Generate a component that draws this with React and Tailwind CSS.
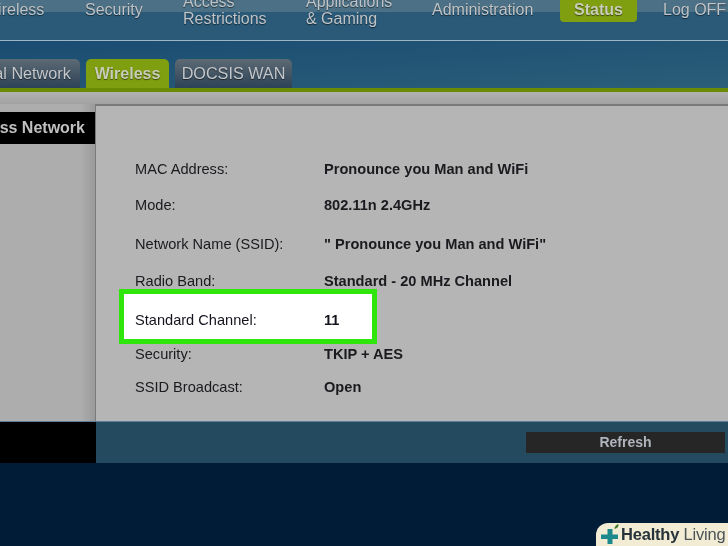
const font = { fontFamily: '"Liberation Sans", Arial, sans-serif' };

const rows = [
  { label: "MAC Address:", value: "Pronounce you Man and WiFi", mt: "mt-[55px]" },
  { label: "Mode:", value: "802.11n 2.4GHz", mt: "mt-[20px]" },
  { label: "Network Name (SSID):", value: "\" Pronounce you Man and WiFi\"", mt: "mt-[23px]" },
  { label: "Radio Band:", value: "Standard - 20 MHz Channel", mt: "mt-[21px]" },
  { label: "Standard Channel:", value: "11", mt: "mt-[23px]", hi: true },
  { label: "Security:", value: "TKIP + AES", mt: "mt-[18px]" },
  { label: "SSID Broadcast:", value: "Open", mt: "mt-[17px]" },
];

const shadow = "[text-shadow:0_1px_1px_rgba(0,0,0,0.55)]";

function Row({ label, value, mt, hi }) {
  return (
    <div className={`relative flex h-4 items-center text-[14.6px] leading-4 ${mt} ${hi ? "text-[#14141c]" : "text-[#1a1a1f]"}`}>
      {hi && <div className="absolute left-[-16px] top-[-23px] h-[55px] w-[258px] border-[5px] border-[#2fe60b] bg-white" />}
      <span className="relative w-[189px] shrink-0">{label}</span>
      <span className="relative font-bold">{value}</span>
    </div>
  );
}

function Tab({ children, active, className }) {
  return (
    <div className={`flex h-[29px] items-center justify-center rounded-t-[5px] text-[16.2px] ${shadow} ${active ? "bg-[#7f9f10] text-[16px] font-bold text-[#c9cdb8]" : "bg-gradient-to-b from-[#5d6a74] to-[#2c4256] text-[#c4c8cc]"} ${className}`}>
      {children}
    </div>
  );
}

export default function App() {
  return (
    <div style={font} className="flex h-[546px] w-[728px] flex-col overflow-hidden bg-[#011c36] blur-[0.4px]">
      {/* Top navigation */}
      <div className="h-[40px] shrink-0 bg-gradient-to-b from-[#4c7186] from-[30%] to-[#2a5a78] to-[31%]">
        <div className={`flex h-[40px] items-start overflow-hidden text-[16px] leading-[17px] text-[#bfc4c8] ${shadow}`}>
          <span className="ml-[-17px] mt-[1px] w-[102px]">Wireless</span>
          <span className="mt-[1px] w-[98px]">Security</span>
          <span className="mt-[-7px] w-[123px]">Access<br />Restrictions</span>
          <span className="mt-[-7px] w-[126px]">Applications<br />&amp; Gaming</span>
          <span className="mt-[1px] w-[128px]">Administration</span>
          <span className="mt-[-6px] flex h-[28px] w-[77px] items-center justify-center rounded-b-[4px] bg-[#7f9f10] pt-[2px] font-bold text-[#c9cdb8]">Status</span>
          <span className="ml-[26px] mt-[1px] whitespace-nowrap">Log OFF</span>
        </div>
      </div>
      {/* Divider */}
      <div className="h-[1px] shrink-0 bg-[#9fb4c4]" />
      {/* Sub tabs */}
      <div className="flex h-[47px] shrink-0 items-end gap-[6px] bg-gradient-to-br from-[#1a4c72] to-[#2b5e78]">
        <Tab className="ml-[-40px] w-[120px]"><span className="ml-[-1px]">Local Network</span></Tab>
        <Tab active className="w-[83px]">Wireless</Tab>
        <Tab className="w-[117px]">DOCSIS WAN</Tab>
      </div>
      <div className="h-[4px] shrink-0 bg-[#6b8a05]" />
      {/* Body */}
      <div className="flex h-[329px] shrink-0 flex-col bg-[#a9a9a9]">
        <div className="h-[12px] shrink-0 bg-gradient-to-b from-[#b2b2b2] to-[#a2a2a2]" />
        <div className="flex min-h-0 flex-1">
          <div className="w-[95px] shrink-0 bg-gradient-to-r from-[#adadad] from-[85%] to-[#9a9a9a]">
            <div className="mt-[8px] flex h-[32px] items-center justify-end bg-black pr-[10px] text-[16px] font-bold whitespace-nowrap text-[#c0c0c0]">
              ss Network
            </div>
          </div>
          <div className="min-w-0 flex-1 border-t-[2px] border-l-[1px] border-[#7a7a7a] bg-[#b5b5b5] pl-[39px]">
            {rows.map((r) => <Row key={r.label} {...r} />)}
          </div>
        </div>
      </div>
      {/* Footer bar */}
      <div className="flex h-[42px] shrink-0 border-t-[1px] border-[#5d7f99]">
        <div className="w-[96px] shrink-0 bg-black" />
        <div className="flex flex-1 items-start bg-[#244a60] pt-[10px] pl-[430px]">
          <div className="flex h-[21px] w-[199px] items-center justify-center bg-[#262626] text-[14px] font-bold text-[#b0b4bc]">Refresh</div>
        </div>
      </div>
      <div className="relative flex-1">
        <div className="absolute bottom-0 right-0 flex h-[23px] w-[132px] items-center rounded-tl-[12px] bg-[#f3ecd4] pl-[3px]">
          <svg width="22" height="22" viewBox="0 0 22 22" className="shrink-0">
            <path d="M8.500 5h5v5.500H19v4.500h-5.500V20h-5v-5H2v-4.500h6.500z" fill="#1c8a8c" />
            <path d="M15.500 5c0-2.500 1.500-4 4-5 .3 2.500-1 4.500-4 5z" fill="#3f7a2a" />
          </svg>
          <span className="whitespace-nowrap text-[16.5px] leading-none tracking-[-0.2px] text-[#26333a]">
            <span className="font-bold">Healthy</span> <span className="text-[#4a5358]">Living</span>
          </span>
        </div>
      </div>
    </div>
  );
}
